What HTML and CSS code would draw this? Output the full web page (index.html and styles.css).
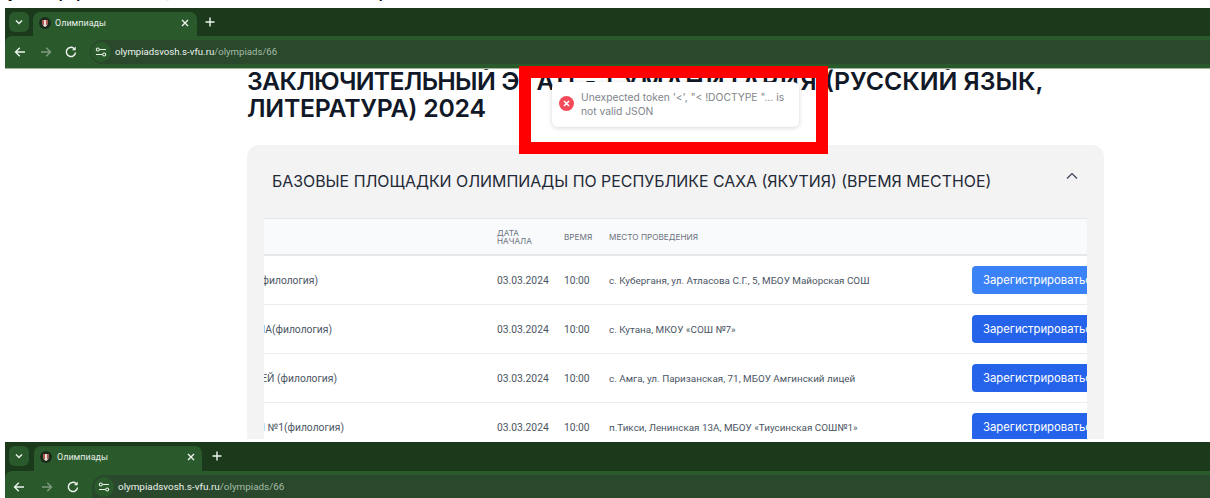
FILE: index.html
```html
<!DOCTYPE html>
<html lang="ru">
<head>
<meta charset="utf-8">
<title>Олимпиады</title>
<link rel="stylesheet" href="styles.css">
</head>
<body>
<div class="caption">
  <span class="caption-word">у</span>
  <span class="caption-word gap-a">р</span>
  <span class="caption-word gap-b">р</span>
  <span class="caption-word gap-c caption-faint">,</span>
  <span class="caption-word gap-d">р</span>
</div>

<section class="browser">
  <div class="tabstrip">
    <span class="tab-search">
      <svg viewBox="0 0 12 12" width="12" height="12"><path d="M3 4.500 6 7.500 9 4.500" fill="none" stroke="#e8f0e8" stroke-width="1.500"/></svg>
    </span>
    <div class="tab">
      <svg class="favicon" viewBox="0 0 12 12" width="12" height="12"><circle cx="6" cy="6" r="6" fill="#1c2a1c"/><path d="M3.400 3h5.200v3.500C8.600 8.500 7 9.500 6 10 5 9.500 3.400 8.500 3.400 6.500z" fill="#e9dfd5"/><path d="M3.400 3H4.800V8.300C3.800 7.600 3.400 7 3.400 6.500zM8.600 3H7.200V8.300C8.200 7.600 8.600 7 8.600 6.500z" fill="#a8352e"/></svg>
      <span class="tab-title">Олимпиады</span>
      <svg class="tab-close" viewBox="0 0 10 10" width="10" height="10"><path d="M2 2 8 8M8 2 2 8" stroke="#f0f5f0" stroke-width="1.400"/></svg>
    </div>
    <svg class="tab-new" viewBox="0 0 12 12" width="12" height="12"><path d="M6 1.500v9M1.500 6h9" stroke="#f0f5f0" stroke-width="1.400"/></svg>
  </div>
  <div class="toolbar">
    <svg class="nav" viewBox="0 0 14 14" width="14" height="14"><path d="M12 7H2.500M6.800 2.700 2.500 7l4.300 4.300" fill="none" stroke="#eef4ee" stroke-width="1.400"/></svg>
    <svg class="nav nav-off" viewBox="0 0 14 14" width="14" height="14"><path d="M2 7h9.500M7.200 2.700 11.500 7l-4.300 4.300" fill="none" stroke="#7f9c80" stroke-width="1.400"/></svg>
    <svg class="nav" viewBox="0 0 14 14" width="14" height="14"><path d="M11.500 7.500A4.600 4.600 0 1 1 10 3.500" fill="none" stroke="#eef4ee" stroke-width="1.500"/><path d="M11.700 1.500v3.700H8z" fill="#eef4ee"/></svg>
    <div class="omnibox">
      <span class="site-info">
        <svg viewBox="0 0 12 12" width="12" height="12"><path d="M5 3.500h6M1 8.500h6" stroke="#e8f0e8" stroke-width="1.100"/><circle cx="2.800" cy="3.500" r="1.500" fill="none" stroke="#e8f0e8" stroke-width="1.100"/><circle cx="9.200" cy="8.500" r="1.500" fill="none" stroke="#e8f0e8" stroke-width="1.100"/></svg>
      </span>
      <span class="url">olympiadsvosh.s-vfu.ru<span class="url-path">/olympiads/66</span></span>
    </div>
  </div>
</section>

<main class="page">
  <div class="content">
    <h1 class="heading"><span class="heading-lead">ЗАКЛЮЧИТЕЛЬНЫЙ</span> <span class="heading-stage">ЭТАП - ГУМАНИТАРИЯ</span> (РУССКИЙ ЯЗЫК, <span class="heading-tail">ЛИТЕРАТУРА) 2024</span></h1>
    <section class="card">
      <header class="card-head">
        <h2 class="card-title">БАЗОВЫЕ ПЛОЩАДКИ ОЛИМПИАДЫ ПО РЕСПУБЛИКЕ САХА (ЯКУТИЯ) (ВРЕМЯ МЕСТНОЕ)</h2>
        <svg class="card-toggle" viewBox="0 0 12 8" width="12" height="8"><path d="M1 6.500 6 1.500l5 5" fill="none" stroke="#374151" stroke-width="1.200"/></svg>
      </header>
      <div class="table">
        <div class="row row-head">
          <span class="cell-name"></span>
          <span class="cell-date">ДАТА<br>НАЧАЛА</span>
          <span class="cell-time">ВРЕМЯ</span>
          <span class="cell-place">МЕСТО ПРОВЕДЕНИЯ</span>
        </div>
        <div class="row">
          <span class="cell-name"><span class="name-clip end-1">(филология)</span></span>
          <span class="cell-date">03.03.2024</span>
          <span class="cell-time">10:00</span>
          <span class="cell-place">с. Куберганя, ул. Атласова С.Г., 5, МБОУ Майорская СОШ</span>
          <a class="btn btn-hover">Зарегистрироваться</a>
        </div>
        <div class="row">
          <span class="cell-name"><span class="name-clip end-2">НА(филология)</span></span>
          <span class="cell-date">03.03.2024</span>
          <span class="cell-time">10:00</span>
          <span class="cell-place">с. Кутана, МКОУ «СОШ №7»</span>
          <a class="btn">Зарегистрироваться</a>
        </div>
        <div class="row">
          <span class="cell-name"><span class="name-clip end-3">ЕЙ (филология)</span></span>
          <span class="cell-date">03.03.2024</span>
          <span class="cell-time">10:00</span>
          <span class="cell-place">с. Амга, ул. Паризанская, 71, МБОУ Амгинский лицей</span>
          <a class="btn">Зарегистрироваться</a>
        </div>
        <div class="row">
          <span class="cell-name"><span class="name-clip end-4">Ш №1(филология)</span></span>
          <span class="cell-date">03.03.2024</span>
          <span class="cell-time">10:00</span>
          <span class="cell-place">п.Тикси, Ленинская 13А, МБОУ «Тиусинская СОШ№1»</span>
          <a class="btn">Зарегистрироваться</a>
        </div>
      </div>
    </section>
  </div>

  <div class="highlight"></div>
  <div class="toast">
    <svg class="toast-icon" viewBox="0 0 16 16" width="15" height="15"><circle cx="8" cy="8" r="8" fill="#f44a5a"/><path d="M5.300 5.300l5.400 5.400M10.700 5.300l-5.400 5.400" stroke="#fff" stroke-width="1.700"/></svg>
    <span class="toast-text">Unexpected token '&lt;', "&lt; !DOCTYPE "... is not valid JSON</span>
  </div>
</main>

<section class="browser browser-lower">
  <div class="tabstrip">
    <span class="tab-search">
      <svg viewBox="0 0 12 12" width="12" height="12"><path d="M3 4.500 6 7.500 9 4.500" fill="none" stroke="#e8f0e8" stroke-width="1.500"/></svg>
    </span>
    <div class="tab">
      <svg class="favicon" viewBox="0 0 12 12" width="12" height="12"><circle cx="6" cy="6" r="6" fill="#1c2a1c"/><path d="M3.400 3h5.200v3.500C8.600 8.500 7 9.500 6 10 5 9.500 3.400 8.500 3.400 6.500z" fill="#e9dfd5"/><path d="M3.400 3H4.800V8.300C3.800 7.600 3.400 7 3.400 6.500zM8.600 3H7.200V8.300C8.200 7.600 8.600 7 8.600 6.500z" fill="#a8352e"/></svg>
      <span class="tab-title">Олимпиады</span>
      <svg class="tab-close" viewBox="0 0 10 10" width="10" height="10"><path d="M2 2 8 8M8 2 2 8" stroke="#f0f5f0" stroke-width="1.400"/></svg>
    </div>
    <svg class="tab-new" viewBox="0 0 12 12" width="12" height="12"><path d="M6 1.500v9M1.500 6h9" stroke="#f0f5f0" stroke-width="1.400"/></svg>
  </div>
  <div class="toolbar">
    <svg class="nav" viewBox="0 0 14 14" width="14" height="14"><path d="M12 7H2.500M6.800 2.700 2.500 7l4.300 4.300" fill="none" stroke="#eef4ee" stroke-width="1.400"/></svg>
    <svg class="nav nav-off" viewBox="0 0 14 14" width="14" height="14"><path d="M2 7h9.500M7.200 2.700 11.500 7l-4.300 4.300" fill="none" stroke="#7f9c80" stroke-width="1.400"/></svg>
    <svg class="nav" viewBox="0 0 14 14" width="14" height="14"><path d="M11.500 7.500A4.600 4.600 0 1 1 10 3.500" fill="none" stroke="#eef4ee" stroke-width="1.500"/><path d="M11.700 1.500v3.700H8z" fill="#eef4ee"/></svg>
    <div class="omnibox">
      <span class="site-info">
        <svg viewBox="0 0 12 12" width="12" height="12"><path d="M5 3.500h6M1 8.500h6" stroke="#e8f0e8" stroke-width="1.100"/><circle cx="2.800" cy="3.500" r="1.500" fill="none" stroke="#e8f0e8" stroke-width="1.100"/><circle cx="9.200" cy="8.500" r="1.500" fill="none" stroke="#e8f0e8" stroke-width="1.100"/></svg>
      </span>
      <span class="url">olympiadsvosh.s-vfu.ru<span class="url-path">/olympiads/66</span></span>
    </div>
  </div>
</section>
</body>
</html>
```
FILE: styles.css
```css
* { box-sizing: border-box; }

html, body {
  margin: 0;
  height: 498px;
  overflow: hidden;
  background: #fff;
}

body {
  display: flex;
  flex-direction: column;
  font-family: Inter, "Noto Sans", sans-serif;
}

/* Line above the upper browser frame: only the descenders stay in view */
.caption {
  flex: 0 0 8px;
  display: flex;
  align-items: flex-start;
  height: 8px;
  padding-left: 8px;
  overflow: hidden;
  font: 700 14px/16px "Liberation Sans", sans-serif;
  color: #000;
}

.caption-word { margin-top: -15px; }
.caption-faint { color: #bbb; }
.gap-a { margin-left: 43px; }
.gap-b { margin-left: 9px; }
.gap-c { margin-left: 81px; }
.gap-d { margin-left: 209px; }

/* Browser frame */
.browser {
  flex: 0 0 auto;
  margin-left: 5px;
  background: #1b3a1b;
  font-family: Roboto, "Noto Sans", sans-serif;
}

.tabstrip {
  display: flex;
  align-items: flex-end;
  height: 28px;
  padding-left: 4px;
}

.tab-search {
  display: flex;
  align-items: center;
  justify-content: center;
  width: 20px;
  height: 20px;
  margin-bottom: 4px;
  border-radius: 6px;
  background: #2a5a2c;
}

.tab {
  display: flex;
  align-items: center;
  width: 164px;
  height: 24px;
  margin-left: 4px;
  padding: 0 6px 3px 6px;
  border-radius: 7px 7px 0 0;
  background: #2a5a2c;
}

.favicon { flex: none; }

.tab-title {
  flex: 1;
  margin-left: 4px;
  font-size: 9px;
  color: #e6eee6;
}

.tab-close { flex: none; margin-right: 1px; }

.tab-new { margin: 0 0 8px 7px; }

.toolbar {
  display: flex;
  align-items: center;
  height: 33px;
  padding: 0 0 1px 8px;
  border-bottom: 1px solid #9bb89c;
  border-radius: 7px 0 0 0;
  background: #2a5a2c;
}

.nav { flex: none; margin-right: 12px; }
.nav-off { margin-right: 11px; }

.omnibox {
  flex: 1;
  display: flex;
  align-items: center;
  height: 24px;
  border-radius: 12px 0 0 12px;
  background: #29482c;
}

.site-info {
  display: flex;
  align-items: center;
  justify-content: center;
  width: 20px;
  height: 20px;
  margin-left: 1px;
  border-radius: 50%;
  background: #2a5a2c;
}

.url {
  margin-left: 4px;
  font-size: 9.650px;
  color: #eef4ee;
  white-space: nowrap;
}

.url-path { color: #a6bca7; }

.browser-lower .tabstrip { height: 29px; }
.browser-lower .tab { width: 168px; height: 25px; margin-left: 5px; padding: 0 5px 3px 6px; }
.browser-lower .tab-title { margin-left: 5px; }
.browser-lower .tab-search { margin-bottom: 5px; }
.browser-lower .tab-new { margin: 0 0 9px 9px; }
.browser-lower .toolbar { height: 27px; padding: 4px 0 0 7px; border: 0; }
.browser-lower .nav { margin-right: 14px; }
.browser-lower .nav-off { margin-right: 12px; }
.browser-lower .omnibox { height: 23px; margin-left: -2px; border-radius: 12px 0 0 0; }
.browser-lower .site-info { margin-left: 1.500px; }
.browser-lower .url { margin-left: 4.500px; font-size: 9.900px; }

/* Page area between the two frames */
.page {
  position: relative;
  flex: 0 0 373px;
  background: #fff;
}

.content {
  display: flex;
  flex-direction: column;
  height: 370px;
  overflow: hidden;
  padding: 0 0 0 247px;
}

.heading {
  flex: none;
  width: 857px;
  margin: -1px 0 23px;
  font-size: 24.800px;
  font-weight: 600;
  line-height: 27px;
  color: #111827;
}

.heading-lead { letter-spacing: -0.700px; }
.heading-stage { letter-spacing: 1.800px; }
.heading-tail { letter-spacing: -0.250px; }

.card {
  flex: none;
  width: 857px;
  padding: 0 17px;
  border-radius: 12px 12px 0 0;
  background: #f3f3f3;
}

.card-head {
  display: flex;
  align-items: center;
  justify-content: space-between;
  height: 73px;
  padding: 0 9px 0 8px;
}

.card-title {
  margin: 0;
  font-size: 15.900px;
  font-weight: 400;
  color: #1f2937;
  white-space: nowrap;
}

.card-toggle { margin-bottom: 12px; }

.table { background: #fff; }

.row {
  display: flex;
  align-items: center;
  height: 49px;
  border-bottom: 1px solid #ececee;
  font-family: Roboto, Inter, sans-serif;
  font-size: 10.300px;
  color: #4b5563;
  white-space: nowrap;
}

.row-head {
  height: 38px;
  border-top: 1px solid #e5e7eb;
  border-bottom: 2px solid #e5e7eb;
  background: #f9fafb;
  font-family: Inter, sans-serif;
  font-size: 8.200px;
  line-height: 8px;
  color: #6b7280;
}

.cell-name {
  flex: 0 0 233px;
  display: flex;
  justify-content: flex-end;
  overflow: hidden;
}

.end-1 { margin-right: 179px; }
.end-2 { margin-right: 165px; }
.end-3 { margin-right: 160px; }
.end-4 { margin-right: 153px; }

.name-clip { flex: none; }

.cell-date { flex: 0 0 67px; }
.cell-time { flex: 0 0 45px; }
.cell-place { flex: 0 0 363px; font-size: 9.900px; }
.row-head .cell-place { font-size: 8.200px; }

.btn {
  flex: none;
  width: 115px;
  height: 28px;
  overflow: hidden;
  padding-left: 11px;
  border-radius: 4px 0 0 4px;
  background: #2563eb;
  font-family: Inter, sans-serif;
  font-size: 11.300px;
  line-height: 28px;
  color: #fff;
}

.btn-hover { background: #3b82f6; }

/* Annotation frame and notification drawn over the page */
.highlight {
  position: absolute;
  left: 519px;
  top: -3px;
  width: 309px;
  height: 88px;
  border: 12px solid #ff0000;
}

.toast {
  position: absolute;
  left: 552px;
  top: 13px;
  display: flex;
  align-items: center;
  width: 247px;
  height: 45px;
  padding: 0 12px 2px 7px;
  border-radius: 6px;
  background: #fff;
  box-shadow: 0 1px 5px rgba(0, 0, 0, 0.16);
}

.toast-icon { flex: none; }

.toast-text {
  margin-left: 7px;
  font-size: 10.300px;
  line-height: 14px;
  color: #80858c;
}
```
